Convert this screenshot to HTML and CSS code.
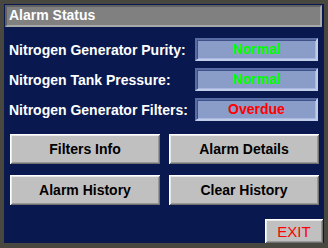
FILE: index.html
```html
<!DOCTYPE html>
<html>
<head>
<meta charset="utf-8">
<link rel="stylesheet" href="styles.css">
</head>
<body>
<div class="panel">
  <div class="title">Alarm Status</div>
  <div class="rows">
    <div class="row">
      <span class="label">Nitrogen Generator Purity:</span>
      <span class="value ok">Normal</span>
    </div>
    <div class="row">
      <span class="label">Nitrogen Tank Pressure:</span>
      <span class="value ok">Normal</span>
    </div>
    <div class="row">
      <span class="label">Nitrogen Generator Filters:</span>
      <span class="value bad">Overdue</span>
    </div>
  </div>
  <div class="buttons">
    <div class="btn">Filters Info</div>
    <div class="btn">Alarm Details</div>
    <div class="btn">Alarm History</div>
    <div class="btn">Clear History</div>
  </div>
  <div class="footer">
    <div class="exit">EXIT</div>
  </div>
</div>
</body>
</html>
```

FILE: styles.css
```css
html, body {
  margin: 0;
  padding: 0;
}
body {
  background: #484840;
  width: 328px;
  height: 248px;
  overflow: hidden;
  font-family: "Liberation Sans", Arial, sans-serif;
}
.panel {
  margin: 4px;
  width: 320px;
  height: 239px;
  background: #0a1850;
  display: flex;
  flex-direction: column;
}
.title {
  margin: 1px 2px 0 1px;
  height: 22px;
  box-sizing: border-box;
  background: #808080;
  border-style: solid;
  border-width: 2px;
  border-color: #606060 #a8a8a8 #a8a8a8 #606060;
  color: #ffffff;
  font-weight: bold;
  font-size: 14px;
  line-height: 17px;
  padding-left: 2px;
}
.rows {
  margin-top: 11px;
  display: flex;
  flex-direction: column;
  gap: 7px;
}
.row {
  display: flex;
  align-items: center;
  padding-left: 5px;
  padding-right: 6px;
}
.label {
  color: #ffffff;
  font-weight: bold;
  font-size: 14px;
}
.value {
  margin-left: auto;
  width: 123px;
  height: 23px;
  box-sizing: border-box;
  background: #8a9cc8;
  border-style: solid;
  border-width: 2px;
  border-color: #5a6ca4 #c0cce8 #c0cce8 #5a6ca4;
  box-shadow: inset 1px 1px #3e5088, inset -1px -1px #a8b8e0;
  text-align: center;
  font-weight: bold;
  font-size: 14px;
  line-height: 19px;
}
.ok { color: #00ff00; }
.bad { color: #ff0000; }
.buttons {
  margin-top: 13px;
  padding-left: 6px;
  display: grid;
  grid-template-columns: 150px 150px;
  column-gap: 9px;
  row-gap: 11px;
}
.btn {
  height: 30px;
  background: #c0c0c0;
  box-shadow: inset 1px 1px #ffffff, inset -1px -1px #707070, inset 2px 2px #e8e8e8, inset -2px -2px #989898;
  display: flex;
  align-items: center;
  justify-content: center;
  color: #000000;
  font-weight: bold;
  font-size: 14px;
}
.footer {
  margin-top: auto;
  display: flex;
  justify-content: flex-end;
  padding-right: 1px;
}
.exit {
  width: 58px;
  height: 24px;
  background: #c0c0c0;
  box-shadow: inset 1px 1px #ffffff, inset -1px -1px #707070, inset 2px 2px #e8e8e8, inset -2px -2px #989898;
  color: #ff0000;
  font-size: 15px;
  display: flex;
  align-items: center;
  justify-content: center;
}
```
